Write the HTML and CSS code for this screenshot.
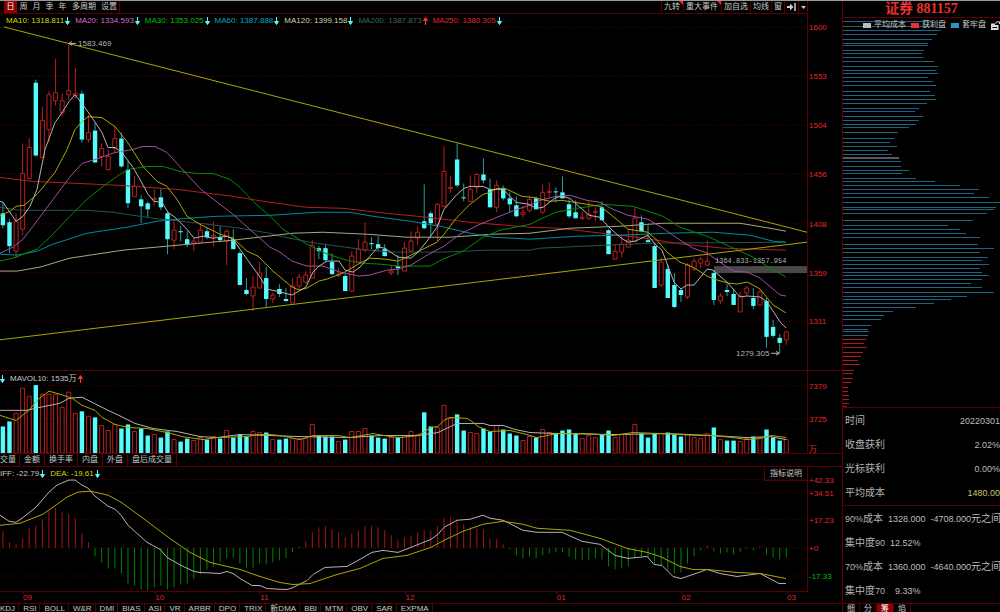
FILE: index.html
```html
<!DOCTYPE html>
<html lang="zh-CN">
<head>
<meta charset="utf-8">
<title>证券 881157</title>
<link rel="stylesheet" href="styles.css">
</head>
<body>
<svg class="defs" aria-hidden="true">
  <symbol id="down" viewBox="0 0 5 8"><path d="M2.5 0V7M.5 4.5L2.5 7.5L4.5 4.5Z" fill="currentColor" stroke="currentColor"/></symbol>
  <symbol id="up" viewBox="0 0 5 8"><path d="M2.5 8V1M.5 3.5L2.5 .5L4.5 3.5Z" fill="currentColor" stroke="currentColor"/></symbol>
</svg>
<div class="terminal">
  <main class="charts">
    <header class="toolbar">
      <nav class="periods">
        <button class="on">日</button><button>周</button><button>月</button><button>季</button><button>年</button><button class="wide">多周期</button><button class="wide">设置</button>
      </nav>
      <div class="tools">
        <button class="flag">九转</button><button class="flag">重大事件</button><button>加自选</button><button>均线</button><button>窗</button><button aria-label="跳到最新"><svg class="jump" viewBox="0 0 9 8"><path d="M0 3H3V0.5L6.5 4L3 7.5V5H0Z" fill="#ccc"/><path d="M8 0V8" stroke="#ccc" stroke-width="1.5"/></svg></button><button aria-label="更多"><svg class="caret" viewBox="0 0 5 3"><path d="M0 0H5L2.5 3Z" fill="#ccc"/></svg></button>
      </div>
    </header>
    <section class="pane pane-price">
      <svg class="plot" id="price"></svg>
      <svg class="axis" id="price-axis"></svg>
      <div class="legend">
        <span class="ma10">MA10: 1318.811<svg class="down"><use href="#down"/></svg></span>
        <span class="ma20">MA20: 1334.593<svg class="down"><use href="#down"/></svg></span>
        <span class="ma30">MA30: 1353.025<svg class="down"><use href="#down"/></svg></span>
        <span class="ma60">MA60: 1387.888<svg class="down"><use href="#down"/></svg></span>
        <span class="ma120">MA120: 1399.158<svg class="down"><use href="#down"/></svg></span>
        <span class="ma200">MA200: 1387.873<svg class="up"><use href="#up"/></svg></span>
        <span class="ma250">MA250: 1380.305<svg class="down"><use href="#down"/></svg></span>
      </div>
    </section>
    <section class="pane pane-volume">
      <svg class="plot" id="volume"></svg>
      <svg class="axis" id="volume-axis"></svg>
      <div class="legend legend-volume">
        <svg class="down"><use href="#down"/></svg>
        <span class="white">MAVOL10: 1535万<svg class="up"><use href="#up"/></svg></span>
      </div>
    </section>
    <nav class="volume-tabs">
      <button>交量</button><button>金额</button><button>换手率</button><button>内盘</button><button>外盘</button><button>盘后成交量</button>
    </nav>
    <section class="pane pane-macd">
      <svg class="plot" id="macd"></svg>
      <svg class="axis" id="macd-axis"></svg>
      <div class="legend legend-macd">
        <span class="white">IFF: -22.79<svg class="down"><use href="#down"/></svg></span>
        <span class="ma10">DEA: -19.61<svg class="down"><use href="#down"/></svg></span>
      </div>
      <button class="explain">指标说明</button>
    </section>
    <div class="dates"><svg id="dates"></svg></div>
    <nav class="indicators">
      <button>KDJ</button><button>RSI</button><button>BOLL</button><button>W&amp;R</button><button>DMI</button><button>BIAS</button><button>ASI</button><button>VR</button><button>ARBR</button><button>DPO</button><button>TRIX</button><button>新DMA</button><button>BBI</button><button>MTM</button><button>OBV</button><button>SAR</button><button>EXPMA</button>
    </nav>
  </main>
  <aside class="side">
    <h1>证券 881157</h1>
    <section class="chips">
      <svg id="chips"></svg>
      <div class="chip-legend">
        <span><i class="sw sw-avg"></i>平均成本</span><span><i class="sw sw-win"></i>获利盘</span><span><i class="sw sw-lose"></i>套牢盘</span>
        <svg class="export" viewBox="0 0 9 9"><path d="M0 2.5H4V4H7.5V9H0Z" fill="#ddd"/><path d="M1.5 6.5H6" stroke="#000"/><path d="M4 2.5L6 .8H8.5V3" fill="none" stroke="#ddd"/></svg>
      </div>
    </section>
    <dl class="stats">
      <div><dt>时间</dt><dd>20220301</dd></div>
      <div><dt>收盘获利</dt><dd>2.02%</dd></div>
      <div><dt>光标获利</dt><dd>0.00%</dd></div>
      <div><dt>平均成本</dt><dd class="gold">1480.00</dd></div>
    </dl>
    <dl class="stats ranges">
      <div><dt><b>90%</b>成本</dt><dd>1328.000</dd><dd class="to">-4708.000<em>元之间</em></dd></div>
      <div><dt>集中度<b>90</b></dt><dd>12.52%</dd></div>
      <div><dt><b>70%</b>成本</dt><dd>1360.000</dd><dd class="to">-4640.000<em>元之间</em></dd></div>
      <div><dt>集中度<b>70</b></dt><dd class="short">9.33%</dd></div>
    </dl>
    <nav class="side-tabs"><button>细</button><button>分</button><button class="on">筹</button><button>焰</button></nav>
  </aside>
</div>
<script src="chart.js"></script>
</body>
</html>
```

FILE: styles.css
```css
* { box-sizing: border-box; }
body {
  margin: 0;
  background: #000;
  color: #c8c8c8;
  font: 8px/12px "Liberation Sans", "Noto Sans CJK SC", sans-serif;
}
button {
  margin: 0;
  padding: 0 4px;
  border: 0;
  border-right: 1px solid #5a0000;
  background: none;
  color: #c8c8c8;
  font: inherit;
  white-space: nowrap;
}
.defs { display: none; }
.terminal {
  display: grid;
  grid-template-columns: minmax(0, 1fr) 158px;
  height: 100vh;
  overflow: hidden;
  border-top: 1px solid #999;
}
.charts { display: flex; flex-direction: column; min-width: 0; min-height: 0; }

.toolbar {
  display: flex;
  justify-content: space-between;
  flex: 0 0 13px;
  margin-right: 34px;
  border-bottom: 1px solid #5a0000;
  border-right: 1px solid #5a0000;
}
.periods, .tools { display: flex; }
.periods { padding-left: 4px; border-right: 1px solid #5a0000; }
.periods button { width: 13px; padding: 0; border-right: 0; }
.periods button.on { background: #8c0000; color: #fff; }
.periods button.wide { width: auto; padding: 0 2px 0 3px; }
.tools { border-left: 1px solid #5a0000; }
.tools button { display: flex; align-items: center; padding: 0 2px; position: relative; }
.tools button.flag { padding-right: 3px; }
.tools button:last-child { border-right: 0; padding-right: 1px; }
.flag::after {
  content: "";
  position: absolute;
  top: 0;
  right: 0;
  border: 2px solid;
  border-color: #f22 #f22 transparent transparent;
}
.jump { width: 9px; height: 8px; }
.caret { width: 5px; height: 3px; }

.pane {
  display: grid;
  grid-template: minmax(0, 1fr) / minmax(0, 1fr) 35px;
  min-height: 0;
}
.pane-price { flex: 357 1 0; }
.pane-volume { flex: 83 1 0; border-top: 1px solid #5a0000; }
.pane-macd { flex: 124 1 0; border-top: 1px solid #5a0000; }
.plot, .axis { display: block; width: 100%; height: 100%; grid-row: 1; }
.plot { grid-column: 1; }
.axis { grid-column: 2; border-left: 1px solid #5a0000; }
.legend {
  grid-area: 1 / 1;
  align-self: start;
  display: flex;
  gap: 5px;
  padding-top: 1px;
  padding-left: 6px;
  white-space: nowrap;
}
.legend span { display: flex; align-items: center; gap: 1px; }
.legend svg { width: 5px; height: 8px; align-self: center; }
.legend-volume { padding-top: 2px; padding-left: 0; }
.legend-macd { padding-left: 0; }
.down { color: #54fcfc; }
.up { color: #f33; }
.white { color: #c8c8c8; }
.ma10 { color: #d8d800; }
.ma20 { color: #d26ad2; }
.ma30 { color: #00c000; }
.ma60 { color: #00acc0; }
.ma120 { color: #d0d0a8; }
.ma200 { color: #3c6868; }
.ma250 { color: #e42424; }
.down, .legend .down { color: #54fcfc; }
.explain {
  grid-area: 1 / 1;
  place-self: start end;
  padding: 0 5px;
  border: 1px solid #5a0000;
  border-width: 0 0 1px 1px;
  line-height: 13px;
}

.volume-tabs { display: flex; flex: 0 0 13px; border-top: 1px solid #5a0000; }
.volume-tabs button:first-child { padding: 0 3px 0 0; }
.dates { flex: 0 0 12px; margin-right: 34px; border-top: 1px solid #5a0000; }
.dates svg { display: block; width: 100%; height: 11px; }
.indicators {
  display: flex;
  flex: 0 0 9px;
  overflow: hidden;
  border-top: 1px solid #5a0000;
}
.indicators button { padding: 0 3px 0 4px; line-height: 9px; }
.indicators button:first-child { padding-left: 0; }

text { font-family: "Liberation Sans", "Noto Sans CJK SC", sans-serif; font-size: 8px; fill: #e02828; }
text.note { fill: #b4b4b4; }
text.mono { font-family: "Liberation Mono", monospace; font-size: 7px; }
text.green { fill: #00c000; }
.line { fill: none; stroke-width: 1; vector-effect: non-scaling-stroke; }
.grid { stroke: #5c0000; stroke-dasharray: 1 2; }

.side {
  display: flex;
  flex-direction: column;
  min-height: 0;
  overflow: hidden;
  border-left: 1px solid #5a0000;
}
.side h1 {
  flex: 0 0 16px;
  margin: 0;
  border-bottom: 1px solid #5a0000;
  color: #e83030;
  font: bold 14px/16px "Liberation Serif", "Noto Sans CJK SC", serif;
  text-align: center;
}
.chips { display: grid; grid-template: minmax(0, 1fr) / minmax(0, 1fr); flex: 1 1 0; min-height: 0; }
.chips > svg { grid-area: 1 / 1; display: block; width: 100%; height: 100%; }
.chip-legend {
  grid-area: 1 / 1;
  place-self: start end;
  display: flex;
  gap: 5px;
  padding-top: 1px;
  white-space: nowrap;
}
.chip-legend span { display: flex; align-items: center; gap: 3px; }
.sw { width: 8px; height: 5px; }
.sw-avg { background: #bbb; }
.sw-win { background: #f03030; }
.sw-lose { background: #2a94c0; }
.export { width: 9px; height: 9px; align-self: center; }

.stats { margin: 0; padding: 1px 0 0 2px; border-top: 1px solid #5a0000; font-size: 9px; line-height: 24px; white-space: nowrap; }
.stats div { display: flex; justify-content: space-between; }
.stats dt { font-size: 10px; color: #b4b4b4; }
.stats dd { margin: 0; color: #bdbdbd; }
.stats b, .ranges dd { font-weight: normal; font-size: 9px; }
.stats em { font-style: normal; font-size: 10px; }
.stats .gold { color: #c8c864; }
.ranges div { justify-content: start; gap: 5px; }
.ranges .to { margin-left: auto; }
.ranges .short { padding-left: 5px; }
.side-tabs { display: flex; flex: 0 0 9px; overflow: hidden; border-top: 1px solid #5a0000; }
.side-tabs button { flex: 0 0 17px; line-height: 10px; }
.side-tabs button.on { background: #8c0000; color: #fff; }
```

FILE: chart.js
```javascript
const NS = "http://www.w3.org/2000/svg";
const X0 = 2.9, STEP = 6.583, W = 807;
const RED = "#b82020", CYAN = "#54fcfc", TEAL = "#2f9a9a";
const cx = i => X0 + i * STEP;

function add(parent, name, attrs, text) {
  const el = document.createElementNS(NS, name);
  for (const k in attrs) el.setAttribute(k, attrs[k]);
  if (text) el.textContent = text;
  parent.appendChild(el);
  return el;
}
const line = (p, x1, y1, x2, y2, stroke, cls = "line") => add(p, "line", { x1, y1, x2, y2, stroke, class: cls });
const rect = (p, x, y, width, height, fill) => add(p, "rect", { x, y, width, height, fill });
const box = (p, x, y, width, height) =>
  add(p, "rect", { x, y, width, height: Math.max(height, 1), fill: "none", stroke: RED, class: "line" });
const curve = (p, pts, stroke) =>
  add(p, "polyline", { points: pts, stroke, class: "line" });
function canvas(id, top, height, width = W) {
  const g = add(document.getElementById(id), "svg", {
    width: "100%", height: "100%", viewBox: `0 ${top} ${width} ${height}`, preserveAspectRatio: "none"
  });
  return g;
}
function label(id, x, y, top, height, text, cls = "") {
  const px = typeof x === "string" ? x : x / W * 100 + "%";
  add(document.getElementById(id), "text", { x: px, y: (y - top) / height * 100 + "%", dy: 3, class: cls }, text);
}

/* kind, high, body top, body bottom, low */
const candles = `c203,214,226,229 c220,223,247,254 r214,222,252,259 r144,174,230,236 r139,148,179,180 c80,83,156,157
r107,121,158,158 r91,95,130,143 r59,93,101,106 r94,101,113,117 r43,91,95,100 r68,94,96,99 c91,94,140,143 r115,133,140,143
c123,131,163,163 r144,149,157,167 r150,157,170,171 r126,139,149,153 c133,139,167,168 c162,170,204,209 r177,187,197,197
c196,200,207,224 c202,204,210,218 r190,199,200,206 c189,198,208,211 c213,214,240,255 r222,231,241,250 c227,232,233,242
c232,240,245,248 r238,242,244,252 r225,231,243,243 c228,232,238,240 r222,236,237,247 c227,238,241,243 r230,232,242,266
c230,240,250,250 c252,254,286,286 c279,291,295,296 r277,288,297,312 r263,274,289,289 c268,279,300,308 r293,296,300,304
c285,290,295,298 c289,300,302,303 r279,287,304,304 r275,278,287,291 r272,276,283,285 r241,246,279,279 c247,249,252,260
c245,249,261,263 c254,263,275,276 r269,275,276,278 c275,277,292,292 r252,257,292,293 r240,250,263,263 r223,243,251,253
c238,244,245,250 c237,245,249,252 c245,250,257,257 r267,272,274,276 c256,267,269,276 r243,249,272,272 r232,242,252,253
r227,233,239,246 c185,222,229,230 c212,214,224,237 r204,205,225,242 r147,172,207,208 r177,188,189,193 c144,160,186,188
c184,198,199,202 r176,190,202,202 r174,175,188,194 c159,175,181,184 c179,190,208,208 r181,186,208,213 c186,189,199,201
c193,199,205,213 c197,206,217,218 r207,213,215,218 r197,200,211,213 c197,199,210,210 r185,193,213,215 r183,192,193,198
c188,192,193,203 c177,193,199,199 c200,205,217,219 c201,213,219,219 r212,218,219,221 r202,215,219,221 r208,212,213,222
c202,208,221,221 c230,231,255,255 r245,252,260,260 r235,245,253,258 r230,241,248,248 r208,219,242,242 c216,223,232,233
c226,241,243,243 c245,247,289,289 r258,263,286,288 c265,270,299,299 c274,286,308,309 c289,291,296,303 r264,266,298,300
r259,262,270,272 r258,260,264,269 r241,262,266,267 c272,274,301,306 r294,297,302,305 c285,291,293,297 c290,295,306,306
r293,297,313,313 r287,289,294,297 c289,299,307,310 r291,293,306,306 c299,302,338,349 c321,328,337,339 c335,339,344,355
r332,333,341,346`.split(/\s+/).map(s => [s[0], ...s.slice(1).split(",").map(Number)]);

const volumes = [427,422,414,389,397,386,395,395,395,408,393,414,412,417,418,426,431,425,429,425,432,429,436,435,438,432,440,442,439,
441,438,440,437,439,431,438,435,437,432,433,433,440,440,439,439,439,439,425,436,437,437,442,440,432,432,429,436,438,439,438,438,436,
432,435,413,427,428,406,419,415,431,433,434,429,432,426,430,434,436,441,437,438,430,433,434,431,430,434,439,436,438,435,431,438,435,
435,425,434,438,434,434,433,435,437,435,438,439,434,428,440,441,441,442,439,437,438,430,438,441,440];

const macd = [532,543,545,539,529,527,520,512,509,513,515,519,534,543,557,563,569,569,574,584,586,590,591,588,586,590,588,585,584,
580,575,570,567,563,559,558,564,568,568,564,565,563,561,559,553,547,542,533,528,527,530,533,538,534,531,527,527,528,531,536,540,538,
536,533,531,531,527,519,518,521,525,528,529,530,539,540,545,550,556,559,557,559,556,554,553,553,557,560,561,561,559,560,567,570,569,
567,559,557,558,565,566,571,574,573,564,557,551,546,552,554,553,555,553,549.5,551,547,555,558,560,558];

/* price pane */
{
  const T = 14, H = 357, s = canvas("price", T, H);
  [27.5, 76.5, 125.5, 174.5, 224.5, 273.5, 322.5].forEach((y, i) => {
    line(s, 0, y, W, y, "#5c0000", "line grid");
    label("price-axis", "1px", y, T, H, ["1600", "1553", "1504", "1456", "1408", "1359", "1311"][i]);
  });
  rect(s, 714, 267, 93, 7, "#484848");
  candles.forEach(([k, hi, a, b, lo], i) => {
    const x = cx(i);
    if (k === "c") {
      line(s, x, hi, x, lo, TEAL);
      rect(s, x - 2.2, a, 4.4, Math.max(b - a, 1), CYAN);
    } else {
      line(s, x, hi, x, a, RED);
      line(s, x, b, x, lo, RED);
      box(s, x - 2, a, 4, b - a);
    }
  });
  curve(s, "0,208 20,211 87,211 113,213 153,219 200,224 240,229 270,234 280,237 310,243 360,250 390,253 443,253 487,251 530,251 540,249 607,246 653,244 786,243", "#2a5050");
  curve(s, "0,178 33,182 120,186 177,190 233,197 270,203 307,208 343,209 377,213 427,218 470,223 530,228 560,229 593,233 637,238 683,245 723,249 786,251", "#b02020");
  curve(s, "0,272 17,272 40,268 70,259 123,251 167,247 233,241 293,234 323,233 367,235 407,238 450,238 493,235 530,234 570,229 620,227 663,224 740,224 770,229 786,232", "#a8a884");
  curve(s, "0,255 17,256 37,252 53,245 87,234 127,228 157,222 187,219 217,217 270,216 317,213 350,213 373,217 410,222 440,227 470,234 493,238 530,240 577,237 620,236 667,234 713,233 750,236 773,242 786,243", "#008a9a");
  curve(s, "0,262 13,259 37,250 50,238 70,217 87,200 103,187 117,177 128,170 147,167 163,167 180,172 197,174 213,174 230,180 240,188 253,202 270,217 283,230 307,245 325,254 343,260 360,264 380,265 398,267 430,267 443,260 463,252 483,238 500,231 530,225 540,220 556,213 577,209 603,205 633,207 648,212 663,217 680,228 707,237 727,246 753,258 767,267 786,278", "#008c00");
  curve(s, "0,254 13,248 23,240 33,227 68,180 72,175 82,164 95,160 115,153 133,150 142,147 155,147 167,153 187,175 200,189 207,195 233,215 253,233 270,248 280,253 292,262 307,267 323,267 340,273 359,277 370,276 387,271 398,270 411,266 427,256 444,247 460,235 480,225 497,218 517,210 530,206 540,201 556,197 570,196 587,201 600,203 613,210 628,216 648,220 663,229 680,241 693,249 707,254 720,263 733,272 747,273 760,279 780,296 786,297", "#a050a0");
  curve(s, "0,216 10,212 16,207 24,206 37,195 42,189 55,173 67,150 75,130 82,122 88,117 102,118 115,127 127,142 143,167 157,182 167,187 177,200 187,217 200,225 220,235 233,239 247,252 258,257 273,272 292,288 299,291 307,289 319,282 327,280 343,274 360,264 370,259 385,260 398,262 407,258 423,250 437,243 444,235 457,218 470,205 483,195 490,193 497,189 505,189 522,197 533,198 550,202 562,201 587,205 600,207 608,213 620,223 628,230 648,233 657,241 667,253 680,263 693,268 707,277 714,280 728,284 737,285 747,283 753,286 760,290 773,306 786,314", "#a8a800");
  curve(s, "0,202 3,203 16,222 23,217 30,207 37,190 45,150 55,123 62,113 69,102 75,95 82,104 90,115 102,133 108,148 115,148 122,153 133,168 140,180 148,195 154,202 162,203 168,213 175,218 187,230 194,239 203,237 213,239 227,237 233,240 247,260 260,278 267,290 280,293 292,296 306,288 313,273 319,267 327,262 339,262 345,271 353,273 360,268 370,257 378,248 385,249 392,254 398,258 411,259 418,253 427,242 437,228 444,210 457,195 464,189 470,187 483,187 490,190 503,190 516,203 529,205 536,209 543,208 556,198 562,197 570,199 580,208 589,216 600,218 608,227 620,238 628,243 635,242 648,236 655,245 662,251 674,283 681,290 687,286 694,286 707,270 713,271 720,277 728,284 740,298 747,297 760,298 767,303 773,312 780,323 786,329", "#b4b4b4");
  line(s, 4, 27, 807, 233, "#a8a800");
  line(s, 0, 341, 807, 243, "#a8a800");
  add(s, "path", { d: "M76 43.5H69M72 41.5L69 43.5L72 45.5M771 354.5H779M776 352.5L779 354.5L776 356.5", stroke: "#b4b4b4", class: "line" });
  label("price", 78, 43, T, H, "1583.469", "note");
  label("price", 736, 354, T, H, "1279.305", "note");
  label("price", 715, 261, T, H, "1364.833-1357.954", "note mono");
}

/* volume pane */
{
  const T = 372, H = 82, s = canvas("volume", T, H);
  [386.5, 419.5].forEach((y, i) => {
    line(s, 0, y, W, y, "#5c0000", "line grid");
    label("volume-axis", "1px", y, T, H, ["7379", "3725"][i]);
  });
  label("volume-axis", "1px", 449, T, H, "万");
  volumes.forEach((y, i) => {
    const x = cx(i);
    if (candles[i][0] === "c") rect(s, x - 2.2, y, 4.4, 454 - y, CYAN);
    else box(s, x - 2, y, 4, 453.5 - y);
  });
  curve(s, "0,411 27,411 40,408 60,404 69,399 82,398 90,402 108,411 121,417 135,424 153,429 177,432 200,437 217,438 240,435 300,437 350,438 380,436 400,436 418,436 438,433 457,424 483,424 490,426 503,426 515,430 530,433 557,434 613,435 667,434 713,436 747,438 770,437 786,440", "#b4b4b4");
  curve(s, "0,416 16,421 30,410 37,401 49,392 60,395 72,399 82,406 95,411 102,418 115,425 128,428 147,429 167,433 182,437 203,440 217,438 247,437 258,435 270,435 280,436 300,440 313,436 338,436 350,438 373,434 390,437 400,438 418,436 431,428 438,427 444,421 450,418 467,419 472,422 478,427 490,432 510,431 523,434 537,438 557,434 587,434 613,436 633,433 660,434 700,436 713,436 733,438 747,440 760,439 772,436 786,438", "#a8a800");
}

/* MACD pane */
{
  const T = 468, H = 123, s = canvas("macd", T, H), zero = 548.5;
  [480.5, 493.5, 520.5, zero, 576.5].forEach((y, i) => {
    line(s, 0, y, W, y, i === 3 ? "#7a0000" : "#5c0000", "line grid");
    label("macd-axis", "1px", y, T, H, ["+42.33", "+34.51", "+17.23", "+0", "-17.33"][i], i === 4 ? "green" : "");
  });
  macd.forEach((y, i) => line(s, cx(i), zero, cx(i), y, y < zero ? "#a01818" : "#008200"));
  curve(s, "0,516 9,522 16,523 22,519 36,508 49,493 57,486 69,481 75,481 82,486 88,489 95,497 108,507 115,510 121,516 128,526 147,543 160,550 167,558 181,566 194,572 200,573 220,574 227,572 233,574 240,579 252,586 260,586 267,589 287,590 293,588 307,581 313,575 325,568 347,567 358,561 372,553 383,551 398,553 411,548 431,540 438,535 444,528 457,521 470,520 483,516 490,519 503,521 523,531 537,533 562,533 582,542 600,545 615,556 628,559 647,557 654,565 662,566 673,577 681,579 693,575 707,570 720,574 737,577 760,574 779,584 786,584", "#b4b4b4");
  curve(s, "0,526 20,524 43,515 67,498 78,493 90,492 108,496 121,503 143,519 167,537 190,553 210,563 240,570 260,577 280,583 293,585 310,584 337,575 360,569 383,559 407,556 431,548 444,541 463,532 483,525 503,522 523,525 537,529 570,531 600,539 627,549 647,553 660,557 680,567 693,570 707,570 737,573 760,574 786,579", "#a8a800");
}

/* month marks */
[["09", 23], ["10", 155], ["11", 260], ["12", 405], ["01", 556], ["02", 681], ["03", 786]].forEach(([m, x]) => {
  line(document.getElementById("dates"), x / W * 100 + "%", 0, x / W * 100 + "%", 2, "#8c0000");
  label("dates", x, 596.5, 592, 11, m);
});

/* cost distribution: y, length */
{
  const s = canvas("chips", 17, 389, 157);
  const losing = "20,88 25,93 29,98 33,94 38,89 42,85 44,85 49,81 52,79 56,80 60,91 65,95 69,93 72,95 76,85 80,90 84,93 90,87 94,92 98,93 102,84 107,76 110,72 115,80 119,76 123,73 126,66 131,55 137,52 141,47 145,54 149,45 153,49 160,58 165,58 169,66 172,59 177,73 180,92 184,117 188,136 192,131 196,146 201,158 206,153 208,151 212,144 219,130 224,105 228,117 232,123 236,137 243,135 247,151 251,137 256,145 259,139 263,146 267,137 271,139 274,146 278,139 282,128 286,139 291,151 295,124 298,108 302,91 306,73 310,50 314,41 318,38 324,28 328,25 330,26 334,25";
  const winning = "338,23 342,21 346,24 351,20 355,18 359,15 363,17 369,11 372,10 377,10 381,8 386,5 390,5 394,6 398,6 402,6 405,4";
  const bars = (list, color) => list.split(" ").forEach(p => {
    const [y, n] = p.split(",").map(Number);
    rect(s, 0, y, n, 1, color);
  });
  bars(losing, "#1d6480");
  bars(winning, "#a81c1c");
  rect(s, 0, 156, 56, 2, "#5a5a5a");
}
```
